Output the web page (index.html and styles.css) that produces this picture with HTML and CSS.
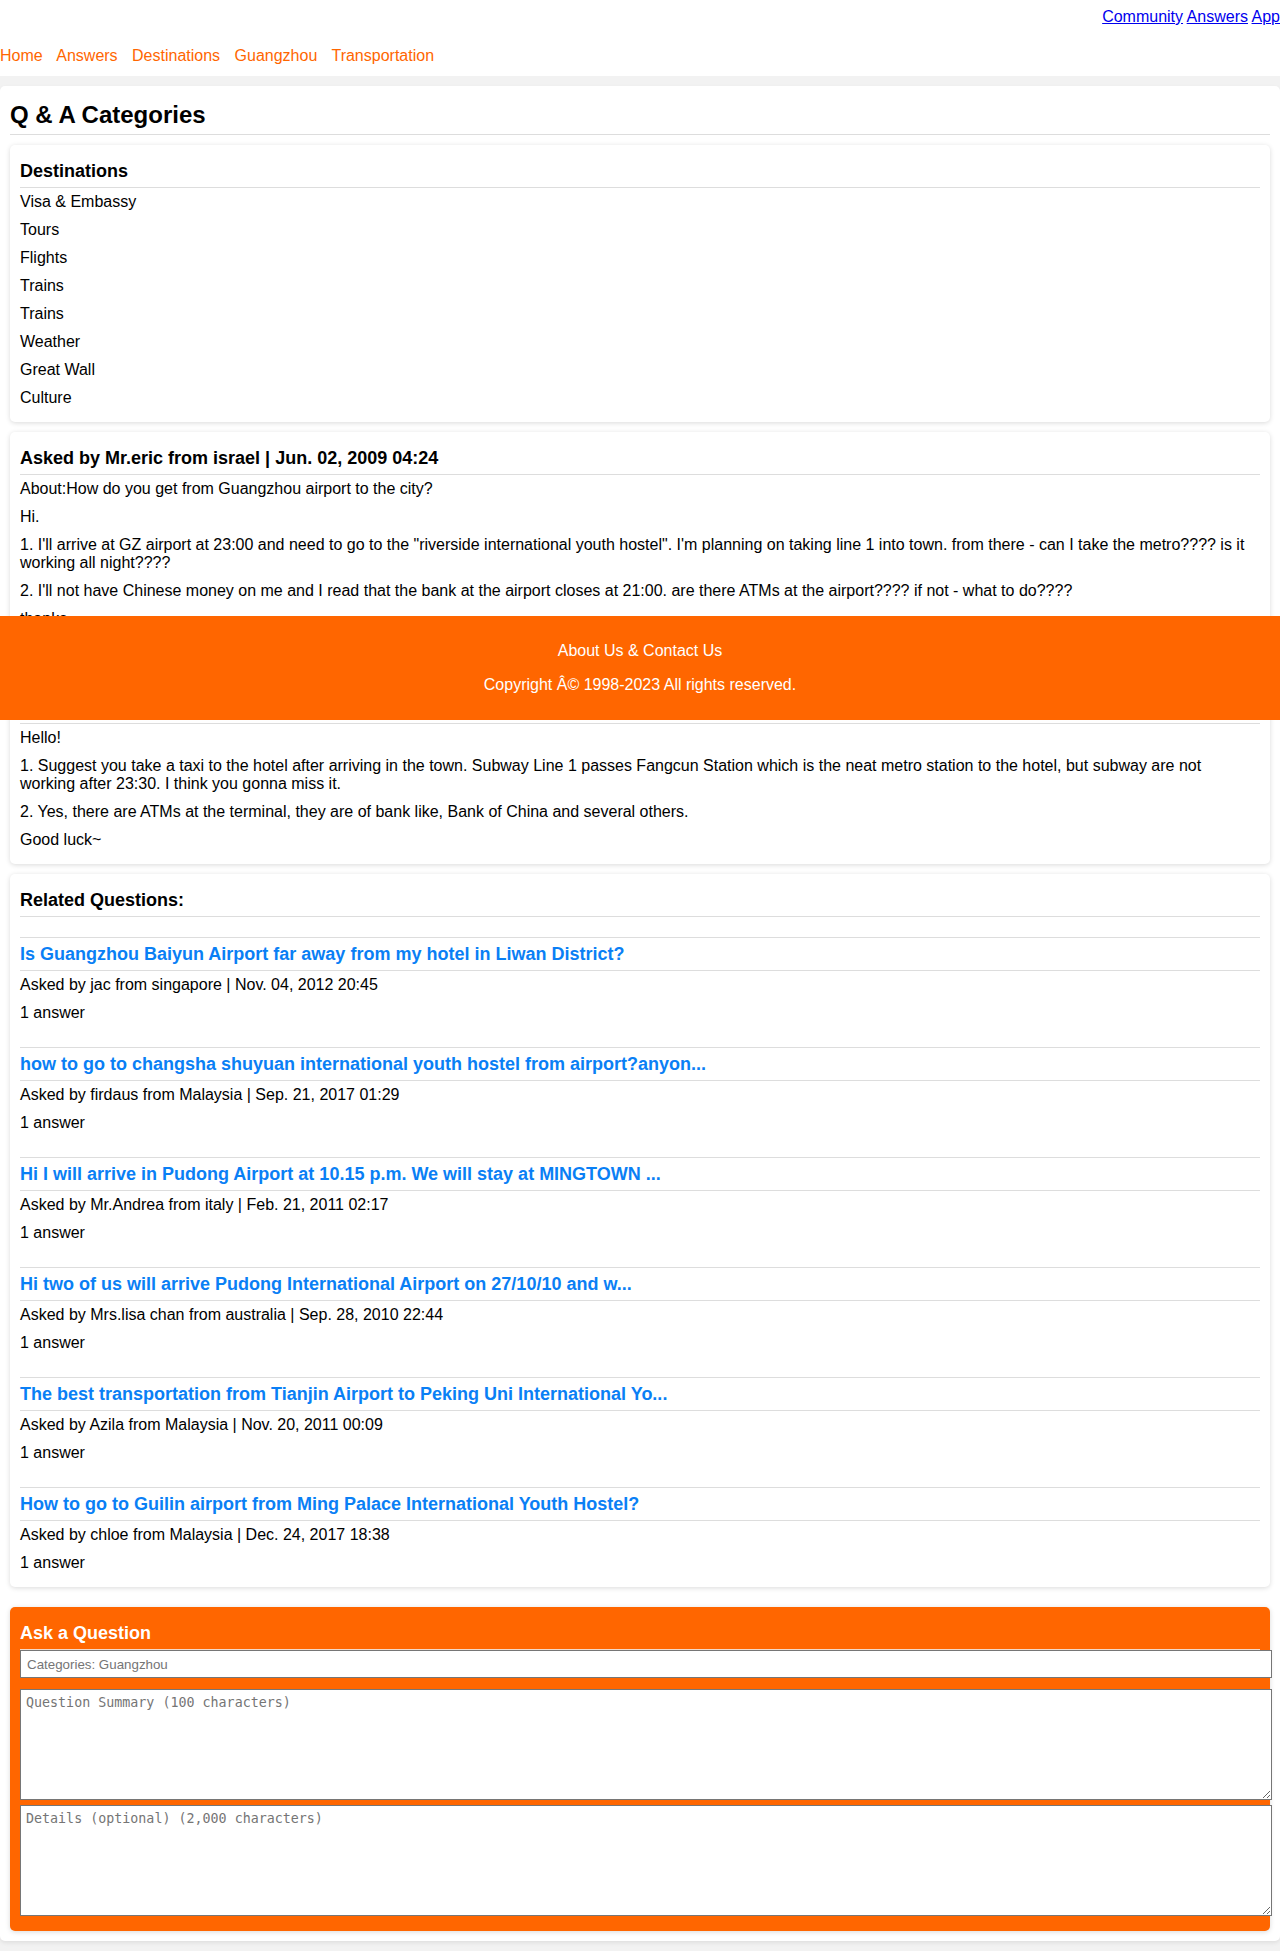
FILE: index.html
```html
<!DOCTYPE html>
<html lang="en">
<head>
<meta charset="utf-8">
<title>How do you get from Guangzhou airport to the city?</title>
<link rel="stylesheet" href="styles.css">
</head>
<body>
<header class="header">
  <div class="toplinks"><a href="#">Community</a> <a href="#">Answers</a> <a href="#">App</a></div>
  <nav class="crumbs"><a href="#">Home</a> <a href="#">Answers</a> <a href="#">Destinations</a> <a href="#">Guangzhou</a> <a href="#">Transportation</a></nav>
</header>
<main class="main">
  <div class="page">
    <h2 class="page-title">Q &amp; A Categories</h2>

    <section class="card">
      <h3 class="card-title">Destinations</h3>
      <p class="row">Visa &amp; Embassy</p>
      <p class="row">Tours</p>
      <p class="row">Flights</p>
      <p class="row">Trains</p>
      <p class="row">Trains</p>
      <p class="row">Weather</p>
      <p class="row">Great Wall</p>
      <p class="row">Culture</p>
    </section>

    <section class="card">
      <h3 class="card-title">Asked by Mr.eric from israel | Jun. 02, 2009 04:24</h3>
      <p class="row">About:How do you get from Guangzhou airport to the city?</p>
      <p class="row">Hi.</p>
      <p class="row">1. I'll arrive at GZ airport at 23:00 and need to go to the "riverside international youth hostel". I'm planning on taking line 1 into town. from there - can I take the metro???? is it working all night????</p>
      <p class="row">2. I'll not have Chinese money on me and I read that the bank at the airport closes at 21:00. are there ATMs at the airport???? if not - what to do????</p>
      <p class="row">thanks</p>
      <p class="row">&nbsp;</p>
    </section>

    <section class="card">
      <h3 class="card-title">Answers (1)</h3>
      <p class="row">Hello!</p>
      <p class="row">1. Suggest you take a taxi to the hotel after arriving in the town. Subway Line 1 passes Fangcun Station which is the neat metro station to the hotel, but subway are not working after 23:30. I think you gonna miss it.</p>
      <p class="row">2. Yes, there are ATMs at the terminal, they are of bank like, Bank of China and several others.</p>
      <p class="row">Good luck~</p>
    </section>

    <section class="card">
      <h3 class="card-title">Related Questions:</h3>
      <div class="rel">
        <h4 class="rel-title"><a href="#">Is Guangzhou Baiyun Airport far away from my hotel in Liwan District?</a></h4>
        <p class="row">Asked by jac from singapore | Nov. 04, 2012 20:45</p>
        <p class="row">1 answer</p>
      </div>
      <div class="rel">
        <h4 class="rel-title"><a href="#">how to go to changsha shuyuan international youth hostel from airport?anyon...</a></h4>
        <p class="row">Asked by firdaus from Malaysia | Sep. 21, 2017 01:29</p>
        <p class="row">1 answer</p>
      </div>
      <div class="rel">
        <h4 class="rel-title"><a href="#">Hi I will arrive in Pudong Airport at 10.15 p.m. We will stay at MINGTOWN ...</a></h4>
        <p class="row">Asked by Mr.Andrea from italy | Feb. 21, 2011 02:17</p>
        <p class="row">1 answer</p>
      </div>
      <div class="rel">
        <h4 class="rel-title"><a href="#">Hi two of us will arrive Pudong International Airport on 27/10/10 and w...</a></h4>
        <p class="row">Asked by Mrs.lisa chan from australia | Sep. 28, 2010 22:44</p>
        <p class="row">1 answer</p>
      </div>
      <div class="rel">
        <h4 class="rel-title"><a href="#">The best transportation from Tianjin Airport to Peking Uni International Yo...</a></h4>
        <p class="row">Asked by Azila from Malaysia | Nov. 20, 2011 00:09</p>
        <p class="row">1 answer</p>
      </div>
      <div class="rel">
        <h4 class="rel-title"><a href="#">How to go to Guilin airport from Ming Palace International Youth Hostel?</a></h4>
        <p class="row">Asked by chloe from Malaysia | Dec. 24, 2017 18:38</p>
        <p class="row">1 answer</p>
      </div>
    </section>

    <section class="card ask">
      <h3 class="card-title ask-title">Ask a Question</h3>
      <form class="ask-form">
        <input class="ask-input" type="text" placeholder="Categories: Guangzhou">
        <textarea class="ask-area first" placeholder="Question Summary (100 characters)"></textarea>
        <textarea class="ask-area" placeholder="Details (optional) (2,000 characters)"></textarea>
      </form>
    </section>
  </div>
</main>
<footer class="footer">
  <p class="foot-line">About Us &amp; Contact Us</p>
  <p class="foot-line">Copyright Â© 1998-2023 All rights reserved.</p>
</footer>
</body>
</html>
```

FILE: styles.css
```css
html, body {
  margin: 0;
  padding: 0;
}
body {
  font-family: "Liberation Sans", Arial, sans-serif;
  font-size: 16px;
  color: #000;
  background: #f2f2f2;
  position: relative;
}
.header {
  background: #fff;
  padding: 8px 0 11px;
}
.toplinks {
  text-align: right;
  line-height: 18px;
  white-space: nowrap;
}
.toplinks a {
  color: #0000ee;
  text-decoration: underline;
}
.crumbs {
  margin-top: 21px;
  line-height: 18px;
}
.crumbs a {
  color: #ff6600;
  text-decoration: none;
  margin-right: 10px;
}
.main {
  padding: 10px 0;
}
.page {
  background: #fff;
  border-radius: 5px;
  padding: 10px;
  box-shadow: 0 2px 4px rgba(0, 0, 0, 0.08);
}
.page-title {
  margin: 0;
  font-size: 24px;
  font-weight: bold;
  line-height: 28px;
  padding: 5px 0;
  border-bottom: 1px solid #ddd;
}
.card {
  background: #fff;
  border-radius: 5px;
  padding: 10px;
  margin-top: 10px;
  box-shadow: 0 1px 5px rgba(0, 0, 0, 0.15);
}
.card-title {
  margin: 0;
  font-size: 18px;
  font-weight: bold;
  line-height: 22px;
  padding: 5px 0;
  border-bottom: 1px solid #ddd;
}
.row {
  margin: 0;
  padding: 5px 0;
  line-height: 18px;
}
.rel {
  margin-top: 20px;
  border-top: 1px solid #ddd;
}
.rel-title {
  margin: 0;
  font-size: 18px;
  font-weight: bold;
  line-height: 22px;
  padding: 5px 0;
  border-bottom: 1px solid #ddd;
}
.rel-title a {
  color: #0a7ff5;
  text-decoration: none;
}
.ask {
  background: #ff6600;
  margin-top: 20px;
}
.ask-title {
  color: #fff;
  border-bottom-color: #f3d9c8;
}
.ask-form {
  margin: 0;
}
.ask-input {
  display: block;
  width: 100%;
  height: 28px;
  box-sizing: border-box;
  width: 1252px;
  margin: 0;
  padding: 0 6px;
  border: 1px solid #767676;
  font-family: "Liberation Sans", Arial, sans-serif;
  font-size: 13.33px;
  background: #fff;
}
.ask-area {
  display: block;
  box-sizing: border-box;
  width: 1252px;
  height: 111px;
  margin: 5px 0 5px;
  padding: 5px;
  border: 1px solid #767676;
  font-family: "DejaVu Sans Mono", monospace;
  font-size: 13.33px;
  background: #fff;
}
.ask-area.first {
  margin-top: 11px;
}
.footer {
  position: absolute;
  top: 616px;
  left: 0;
  width: 100%;
  height: 104px;
  box-sizing: border-box;
  padding: 10px 0;
  background: #ff6600;
  color: #fff;
  text-align: center;
  z-index: 10;
}
.foot-line {
  margin: 16px 0;
  line-height: 18.4px;
}
```
